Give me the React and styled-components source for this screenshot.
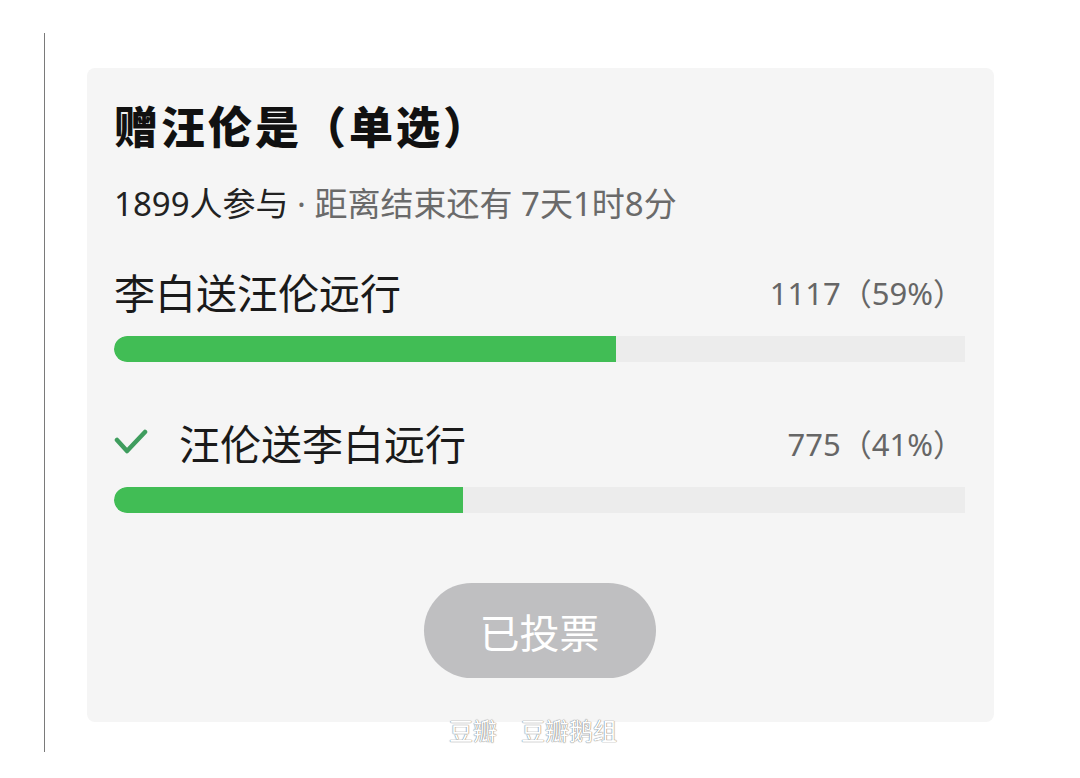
import React from 'react'
import styled, { createGlobalStyle } from 'styled-components'

const options = [
  { label: '李白送汪伦远行', count: 1117, pct: 59, voted: false },
  { label: '汪伦送李白远行', count: 775, pct: 41, voted: true },
]

function App() {
  return (
    <>
      <GlobalStyle />
      <Page>
        <SideLine />
        <Card>
          <Title>赠汪伦是（单选）</Title>
          <Meta>
            <strong>1899人参与</strong> · 距离结束还有 7天1时8分
          </Meta>
          <OptionList>
            {options.map((opt) => (
              <Option key={opt.label}>
                <OptionRow>
                  <OptionLabel>
                    {opt.voted && (
                      <Check viewBox="0 0 34 26">
                        <polyline points="3,11 13,22 31,3" />
                      </Check>
                    )}
                    {opt.label}
                  </OptionLabel>
                  <OptionValue>
                    {opt.count}（{opt.pct}%）
                  </OptionValue>
                </OptionRow>
                <Track>
                  <Fill style={{ width: `${opt.pct}%` }} />
                </Track>
              </Option>
            ))}
          </OptionList>
          <VoteButton disabled>已投票</VoteButton>
          <Watermark>豆瓣　豆瓣鹅组</Watermark>
        </Card>
      </Page>
    </>
  )
}

export default App

const GlobalStyle = createGlobalStyle`
  body {
    margin: 0;
    background: #fff;
    font-family: "Noto Sans", "Noto Sans CJK SC", sans-serif;
    text-spacing-trim: space-all;
  }
`

const Page = styled.div`
  display: flex;
  align-items: flex-start;
  padding: 33px 0 0 44px;
  height: 778px;
  box-sizing: border-box;
`

const SideLine = styled.div`
  width: 1px;
  height: 719px;
  background: #7a7a7a;
`

const Card = styled.section`
  position: relative;
  display: flex;
  flex-direction: column;
  box-sizing: border-box;
  width: 907px;
  height: 654px;
  margin: 35px 0 0 42px;
  padding: 33px 29px 0 27px;
  background: #f5f5f5;
  border-radius: 8px;
`

const Title = styled.h1`
  margin: 0;
  font-size: 44px;
  line-height: 52px;
  font-weight: 900;
  letter-spacing: 3px;
  color: #111;
`

const Meta = styled.div`
  margin-top: 31px;
  font-size: 33px;
  line-height: 40px;
  color: #6a6a6a;
  strong {
    font-weight: 400;
    color: #222;
  }
`

const OptionList = styled.div`
  display: flex;
  flex-direction: column;
  gap: 56px;
  margin-top: 43px;
`

const Option = styled.div`
  display: flex;
  flex-direction: column;
  gap: 21px;
`

const OptionRow = styled.div`
  display: flex;
  align-items: center;
  justify-content: space-between;
  height: 48px;
`

const OptionLabel = styled.div`
  display: flex;
  align-items: center;
  font-size: 41px;
  color: #1a1a1a;
`

const Check = styled.svg`
  width: 34px;
  height: 26px;
  margin-right: 31px;
  fill: none;
  stroke: #3f9d5e;
  stroke-width: 4.5;
  stroke-linecap: round;
  stroke-linejoin: round;
`

const OptionValue = styled.div`
  padding-right: 1px;
  font-size: 31px;
  color: #666;
`

const Track = styled.div`
  height: 26px;
  border-radius: 13px 0 0 13px;
  background: #ececec;
  overflow: hidden;
`

const Fill = styled.div`
  height: 100%;
  background: #41bd55;
  border-radius: 13px 0 0 13px;
`

const VoteButton = styled.button`
  align-self: center;
  margin-top: 70px;
  width: 232px;
  height: 95px;
  border: none;
  border-radius: 48px;
  background: #bfbfc1;
  color: #fff;
  font-family: inherit;
  font-size: 40px;
`

const Watermark = styled.div`
  position: absolute;
  left: 362px;
  bottom: -22px;
  font-size: 24px;
  line-height: 26px;
  color: #fff;
  text-shadow: 0 0 1px #777, 0 0 1px #777;
`
